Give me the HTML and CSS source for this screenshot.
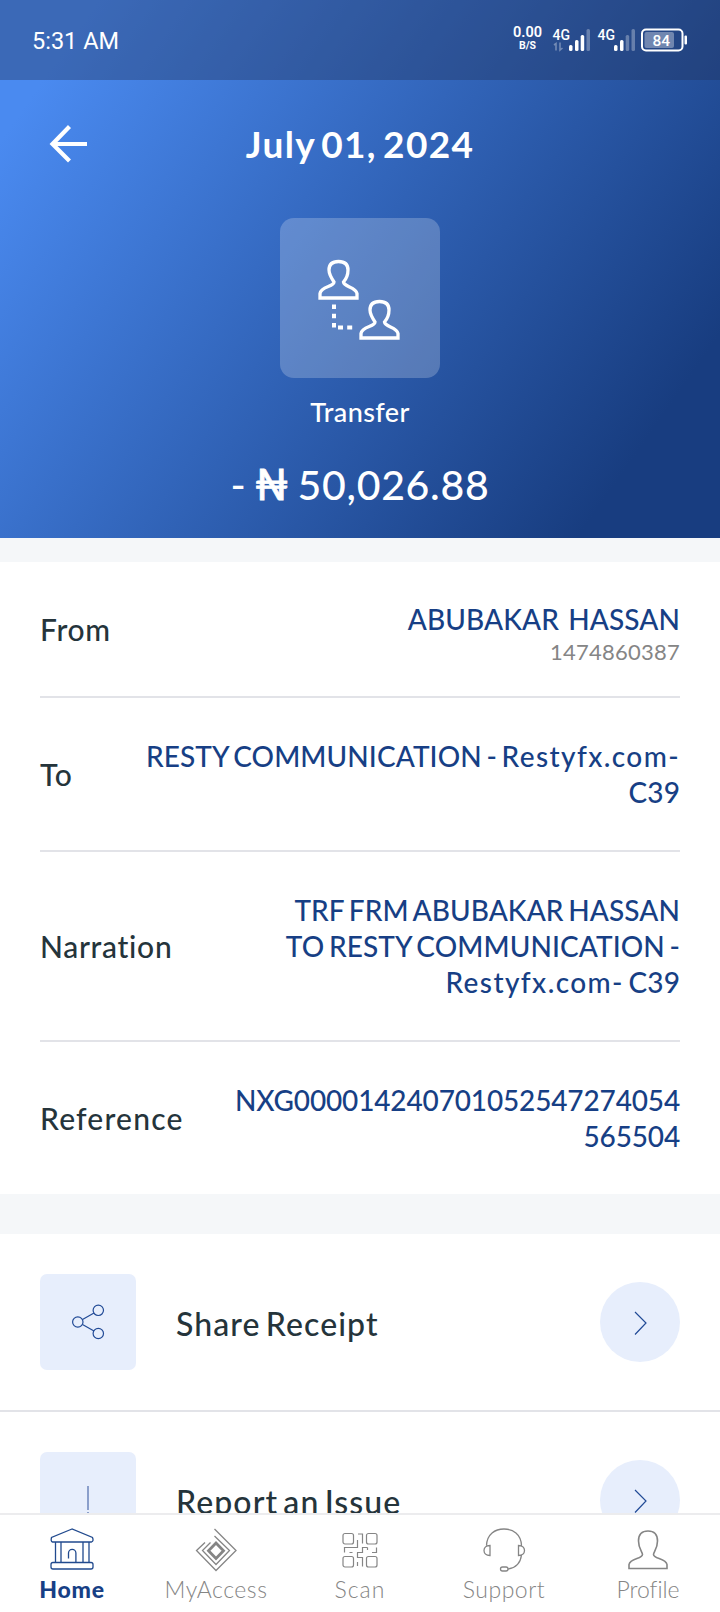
FILE: index.html
```html
<!DOCTYPE html>
<html lang="en">
<head>
<meta charset="utf-8">
<title>Transaction details</title>
<link rel="stylesheet" href="styles.css">
</head>
<body>
<div class="screen">
  <header class="hero">
    <div class="status">
      <span class="time">5:31 AM</span>
      <div class="speed"><b>0.00</b><span>B/S</span></div>
      <svg class="signals" width="176" height="32" viewBox="544 24 176 32">
        <g fill="#fff">
          <text x="553.5" y="40" class="net">4G</text><text x="598.5" y="40" class="net">4G</text>
          <rect x="570" y="45" width="3.5" height="6" rx="1.5"/><rect x="576" y="40" width="3.5" height="11" rx="1.5"/><rect x="581.7" y="35" width="3.5" height="16" rx="1.5"/>
          <rect x="587.5" y="29" width="3.5" height="22" rx="1.5" opacity=".3"/>
          <rect x="615" y="45" width="3.5" height="6" rx="1.5"/><rect x="621" y="40" width="3.5" height="11" rx="1.5"/>
          <rect x="626.7" y="35" width="3.5" height="16" rx="1.5" opacity=".3"/><rect x="632.5" y="29" width="3.5" height="22" rx="1.5" opacity=".3"/>
          <rect x="645.5" y="32" width="29.5" height="16" rx="2" opacity=".35"/>
          <rect x="685.5" y="35.5" width="2.5" height="9" rx="1"/>
          <text x="653.5" y="45.5" class="level">84</text>
        </g>
        <path d="M557 50.500v-7l-2 1.500M561 42.500v7.500l2.500-2" fill="none" stroke="#fff" stroke-width="1.600" opacity=".35"/>
        <rect x="643" y="29.500" width="40.500" height="21" rx="4" fill="none" stroke="#fff" stroke-width="2"/>
      </svg>
    </div>
    <div class="titlebar">
      <svg class="back" width="40" height="40" viewBox="0 0 40 40"><path d="M21.500 2.500 4.500 20l17 17M4.500 20H39" fill="none" stroke="#fff" stroke-width="4.200"/></svg>
      <h1>July 01, 2024</h1>
    </div>
    <div class="tile">
      <svg width="160" height="160" viewBox="0 0 160 160" fill="none" stroke="#fff" stroke-width="3.300">
        <path id="person" d="M40 80V75.500C41 68 54 69 54 64C50 58 49 56 49 52C49 47 52 43.500 58.500 43.500C65 43.500 68 47 68 52C68 57 67 60 63.500 64C64 69 76 69 77 75.500V80Z"/>
        <use href="#person" x="41" y="40"/>
        <path d="M54 86.500v24" stroke-width="4" stroke-dasharray="4.500 4.800"/>
        <path d="M58 109.500h16" stroke-width="4" stroke-dasharray="5 4.200"/>
      </svg>
    </div>
    <p class="kind">Transfer</p>
    <p class="amount">- <span class="naira">₦</span> 50,026.88</p>
  </header>

  <section class="details">
    <div class="row from"><span class="label">From</span><div class="value">ABUBAKAR&nbsp; HASSAN<small>1474860387</small></div></div>
    <div class="row"><span class="label">To</span><div class="value">RESTY COMMUNICATION - <span class="site">Restyfx.com-</span><br>C39</div></div>
    <div class="row"><span class="label">Narration</span><div class="value">TRF FRM ABUBAKAR HASSAN<br>TO RESTY COMMUNICATION -<br><span class="site">Restyfx.com-</span> C39</div></div>
    <div class="row"><span class="label reference">Reference</span><div class="value digits">NXG000014240701052547274054<br>565504</div></div>
  </section>

  <section class="actions">
    <div class="action">
      <div class="box"><svg width="96" height="96" viewBox="0 0 96 96" fill="none" stroke="#214a96" stroke-width="1.200"><circle cx="37.800" cy="48" r="5.200"/><circle cx="58.300" cy="36.300" r="5.200"/><circle cx="58.300" cy="59.500" r="5.200"/><path d="m42.500 45.500 11.500-6.500M42.500 50.500 54 57"/></svg></div>
      <span class="action-name">Share Receipt</span>
      <div class="go"><svg width="80" height="80" viewBox="0 0 80 80"><path d="m35 30 11 11-11 11.500" fill="none" stroke="#214a96" stroke-width="1.200"/></svg></div>
    </div>
    <div class="action">
      <div class="box"><svg width="96" height="96" viewBox="0 0 96 96"><path d="M48 34v24M48 60v2" fill="none" stroke="#8b9fcb" stroke-width="2"/></svg></div>
      <span class="action-name">Report an Issue</span>
      <div class="go"><svg width="80" height="80" viewBox="0 0 80 80"><path d="m35 30 11 11-11 11.500" fill="none" stroke="#214a96" stroke-width="1.200"/></svg></div>
    </div>
  </section>

  <nav class="tabs">
    <div class="tab active">
      <svg width="48" height="48" viewBox="0 0 48 48" fill="none" stroke="#214a8e" stroke-width="1.300"><path d="M24 3 3.500 11.500Q2.500 15.500 4.500 16h39q2.500-1 1-4.500ZM7.500 16v20.500M13 16v20.500M35 16v20.500M41 16v20.500M20.500 32.500v-5.500a3.700 3.700 0 0 1 7.400 0v9.500"/><rect x="3" y="36.500" width="42" height="6.500" rx="2"/></svg>
      <span>Home</span></div>
    <div class="tab">
      <svg width="48" height="48" viewBox="0 0 48 48" fill="none" stroke="#858585" stroke-width="1.300"><path d="M22.500 3 44 24.500 24 44.500 4.500 24.500l8.500-8M22.500 10 37.500 24.500 24 38.500 10.500 24.500l8-8"/><path d="m24 17 7.500 7.700-7.500 7.700-7.500-7.700Z" stroke-width="2.800"/></svg>
      <span>MyAccess</span></div>
    <div class="tab">
      <svg width="48" height="48" viewBox="0 0 48 48" fill="none" stroke="#858585" stroke-width="1.200"><rect x="7" y="7.500" width="10.500" height="10.500" rx="2"/><rect x="30.500" y="7.500" width="10.500" height="10.500" rx="2"/><rect x="7" y="30.500" width="10.500" height="10.500" rx="2"/><rect x="30.500" y="30.500" width="10.500" height="10.500" rx="2"/><path d="M22 8h4.500v9.500M21.500 14v7.500H8.500v5M13.500 26.500h3M21 26.500h5.500v-5h5M31.500 21.500v2.500M40.500 21.500v5h-4.500M21.500 26.500v5h5v9M21.500 36v4"/></svg>
      <span class="scan">Scan</span></div>
    <div class="tab">
      <svg width="48" height="48" viewBox="0 0 48 48" fill="none" stroke="#858585" stroke-width="1.300"><path d="M6.500 19.500C7 8 15 3 24 3s17 5 17.500 16.500M10 19.500v10c-8 0-8-10 0-10ZM38.500 19.500v10c8 0 8-10 0-10ZM41.500 29c-1 8-6 13-13.500 14"/><rect x="20.500" y="41" width="7.500" height="4" rx="2"/></svg>
      <span>Support</span></div>
    <div class="tab">
      <svg width="48" height="48" viewBox="0 0 48 48" fill="none" stroke="#858585" stroke-width="1.600"><path d="M5 42.500V38.500C6 32 18.500 33 18.500 28.500C18.500 26 14.500 23 14.500 15C14.500 8.500 18 5 24 5S33.500 8.500 33.500 15C33.500 23 29.500 26 29.500 28.500C29.500 33 42 32 43 38.500V42.500Z"/></svg>
      <span class="profile">Profile</span></div>
  </nav>
</div>
</body>
</html>
```
FILE: styles.css
```css
* { box-sizing: border-box; }
body { margin: 0; font-family: Lato, "Noto Sans", sans-serif; font-variant-ligatures: none; }
h1, p { margin: 0; }
svg { display: block; }
.screen { width: 720px; height: 1612px; display: flex; flex-direction: column; overflow: hidden; background: #f5f7f9; }

.hero { height: 538px; flex: none; display: flex; flex-direction: column; align-items: center; color: #fff;
  background: linear-gradient(125deg, #4a8af0 9%, #183d80 87%); }
.status { width: 100%; height: 80px; flex: none; display: flex; align-items: center; padding-left: 32px; background: rgba(34, 48, 82, .36); font-family: Roboto, sans-serif; }
.time { width: 480px; padding-top: 2px; font-size: 23.5px; }
.speed { width: 31px; height: 24px; display: flex; flex-direction: column; align-items: center; margin-top: -4px; }
.speed b { font-size: 14.5px; line-height: 14px; font-weight: 600; }
.speed span { font-size: 10.5px; line-height: 11px; font-weight: 700; }
.net { font-size: 14px; font-weight: 500; }
.level { font-size: 15.5px; font-weight: 500; }
.titlebar { width: 100%; height: 138px; flex: none; display: grid; grid-template-columns: 48px 1fr 48px; padding-top: 44px; }
.back { margin-left: 48px; }
h1 { margin-top: -2px; font-size: 37px; line-height: 44px; text-align: center; font-weight: 700; letter-spacing: 1.3px; word-spacing: -4px; }
.tile { width: 160px; height: 160px; flex: none; border-radius: 14px; background: rgba(255, 255, 255, .22); }
.kind { font-size: 27px; line-height: 34px; margin-top: 17px; letter-spacing: .4px; font-weight: 500; }
.amount { font-size: 41px; line-height: 50px; margin-top: 31px; letter-spacing: .7px; word-spacing: -3px; font-weight: 500; white-space: nowrap; }
.naira { font-size: 43px; line-height: 40px; -webkit-text-stroke: .8px #fff; }

.details { height: 632px; flex: none; margin-top: 24px; padding: 0 40px; background: #fff; }
.row { display: flex; align-items: center; justify-content: space-between; padding: 40px 0; border-bottom: 2px solid #e2e3e8; }
.row:last-child { border-bottom: 0; }
.row.from { height: 136px; padding: 0; }
.label { font-size: 30px; line-height: 36px; color: #25343b; letter-spacing: .7px; font-weight: 500; }
.label.reference { letter-spacing: 1.2px; }
.value { text-align: right; font-size: 28px; line-height: 36px; color: #173f85; white-space: nowrap; word-spacing: -2.5px; letter-spacing: .1px; font-weight: 500; }
.value .site { letter-spacing: 1.4px; }
.value.digits { letter-spacing: -.15px; }
.from .value { height: 56px; }
.value small { display: block; font-size: 22px; line-height: 30px; color: #858585; letter-spacing: .25px; font-weight: 400; }

.actions { height: 279px; flex: none; margin-top: 40px; overflow: hidden; background: #fff; }
.action { height: 178px; display: flex; align-items: center; padding: 0 40px; border-bottom: 2px solid #e2e3e8; }
.box { width: 96px; height: 96px; border-radius: 7px; background: #e7eefc; }
.action-name { flex: 1; padding: 3px 0 0 40px; font-size: 32px; line-height: 40px; color: #25343b; letter-spacing: 1.1px; word-spacing: -4px; font-weight: 500; }
.go { width: 80px; height: 80px; border-radius: 50%; background: #e7eefc; }

.tabs { height: 99px; flex: none; display: grid; grid-template-columns: repeat(5, 144px); border-top: 2px solid #ececee; background: #fff; }
.tab { display: flex; flex-direction: column; align-items: center; gap: 1px; padding-top: 11px; font-size: 23px; line-height: 28px; font-weight: 300; letter-spacing: .5px; color: #858585; }
.tab.active { color: #173f85; font-weight: 900; letter-spacing: .8px; }
.tab .scan { letter-spacing: 1px; }
.tab .profile { letter-spacing: 0; }
```
